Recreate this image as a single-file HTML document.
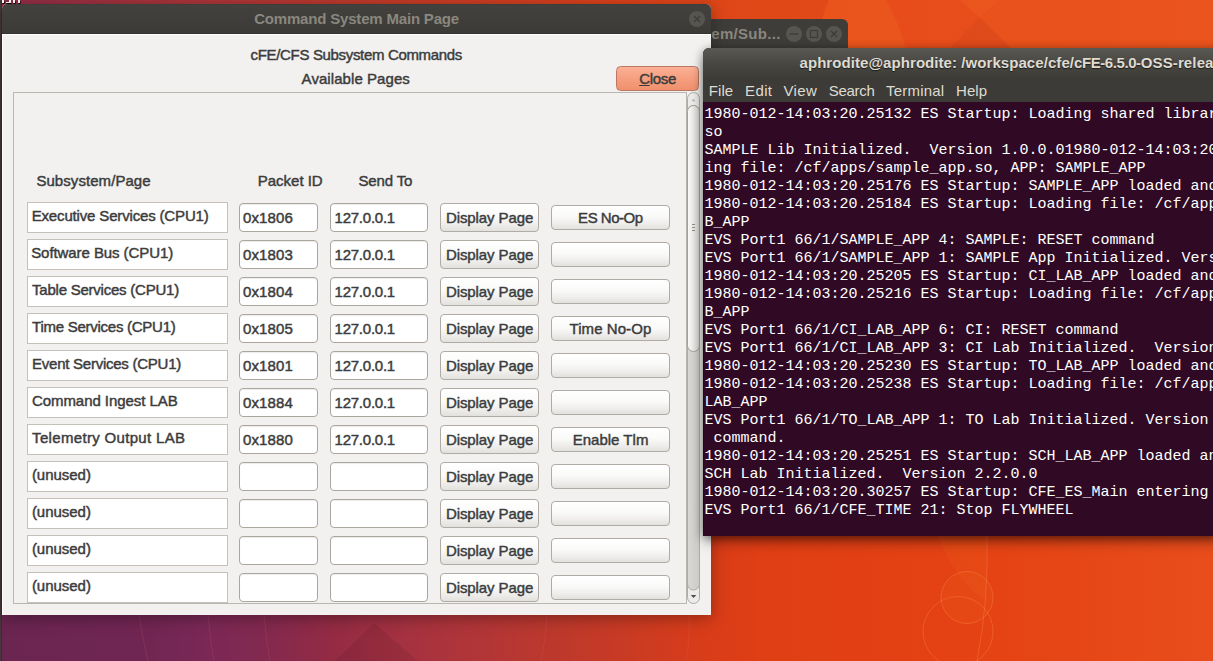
<!DOCTYPE html>
<html>
<head>
<meta charset="utf-8">
<title>Command System Main Page</title>
<style>
*{box-sizing:border-box;margin:0;padding:0}
html,body{width:1213px;height:661px;overflow:hidden}
body{position:relative;font-family:"Liberation Sans",sans-serif;font-size:15px;line-height:17px;color:#3c3c3c;background:#e2431a}
.abs{position:absolute}
svg{display:block}
#wall{left:0;top:0;width:1213px;height:661px;background:linear-gradient(90deg,#6a2551 0px,#712652 150px,#7a2856 205px,#84294e 270px,#942b43 335px,#a63240 410px,#b03538 470px,#bb382e 545px,#c53a26 605px,#d63c1b 690px,#e03e14 760px,#e54314 1000px,#e94d1c 1213px)}
#walltop{left:0;top:0;width:1213px;height:60px;background:linear-gradient(90deg,#8f2c4a 0px,#a3333c 130px,#ab353a 200px,#c53b27 400px,#dc421a 620px,#e64a19 760px,#e9511d 1213px)}
#strip{left:0;top:0;width:2px;height:661px;background:linear-gradient(90deg,#48383b 0,#48383b 1px,#3a2e30 1px)}
#bw{left:600px;top:19px;width:248px;height:41px;background:#3e3d39;border-radius:0 6px 0 0}
#mw{left:2px;top:4px;width:709px;height:611px;background:linear-gradient(90deg,#fff 0,#fff 1px,#f2f1f0 1px);border-radius:5px 5px 0 0;box-shadow:0 3px 16px rgba(0,0,0,.34)}
#mwt{left:0;top:0;width:709px;height:30px;background:linear-gradient(#3b3d3a 0,#42413d 1.500px,#3c3b37 100%);border-radius:5px 5px 0 0;border-bottom:1px solid #33322f}
.ttl{font-weight:bold;color:#8a877f;white-space:nowrap}
.txt{white-space:nowrap;-webkit-text-stroke:0.45px #3c3c3c}
.circ{width:16px;height:16px;border-radius:50%;background:#57554f}
#closeb{left:614px;top:62px;width:83px;height:25px;border:1px solid #bb7860;border-radius:4.500px;background:linear-gradient(#fbb095,#f59f80 50%,#f0906c)}
#frame{left:11px;top:88px;width:674px;height:512px;border:1px solid #bab7b1;overflow:hidden}
#sb{left:685px;top:88px;width:13px;height:512px}
.lbl{background:#fff;border:1px solid #c4c1bb;height:31px;width:201px;left:13px}
.ent{background:#fff;border:1px solid #aba79f;border-radius:4px;height:29px;box-shadow:inset 0 1px 1px rgba(0,0,0,.08)}
.btn{border:1px solid #b0aca5;border-radius:4px;background:linear-gradient(#fff,#fafaf9 45%,#efeeec 75%,#e3e1dd)}
#term{left:703px;top:48px;width:520px;height:488px;background:#300a24;border-radius:6px 0 0 0;box-shadow:0 6px 14px -2px rgba(0,0,0,.5),0 1px 8px rgba(0,0,0,.3)}
#termt{left:0;top:0;width:520px;height:31px;background:linear-gradient(#5a5852,#45443f 60%,#3c3b37);border-radius:6px 0 0 0}
#termm{left:0;top:31px;width:520px;height:23px;background:#3c3b37}
.mi{color:#dfdbd2;white-space:nowrap}
#tt{left:1.4px;top:58px;font-family:"Liberation Mono",monospace;font-size:15px;line-height:18px;color:#fff;white-space:pre}

.ish{background:#fff;box-shadow:0.6px 1px 0 rgba(0,0,0,.9)}
#termb{left:0;top:54px;width:1px;height:434px;background:#25061b}
#mwhl{left:1px;top:30px;width:708px;height:1px;background:#fff}

</style>
</head>
<body>
<div id="wall" class="abs"></div>
<div id="walltop" class="abs"></div>
<svg class="abs" style="left:0;top:0" width="1213" height="661">
<path d="M829 0Q817 25 822 50H906Q899 22 886 0z" fill="#ffa030" fill-opacity=".11"/>
<path d="M700 0H829Q817 25 822 50H700z" fill="#000" fill-opacity=".02"/>
<path d="M960 0H1000L979.500 17.500z" fill="#ffa030" fill-opacity=".1"/>
<path d="M979.500 17.500L1013 50H948z" fill="#000" fill-opacity=".035"/>
<path d="M1000 0H1213V50H1013L979.500 17.500z" fill="#ffa030" fill-opacity=".05"/>
<path d="M374 623L335 661H418z" fill="#000" fill-opacity=".07"/>
<path d="M139 615Q143 640 148 661M208 615Q210 640 214 661M264 615Q266 640 270 661M547 615Q546 640 541 661M689 615Q690 640 686 661" fill="none" stroke="#ff7a7a" stroke-opacity=".13" stroke-width="1"/>
<circle cx="967" cy="597.500" r="26" fill="#ffa030" fill-opacity=".06" stroke="#ff9a55" stroke-opacity=".3" stroke-width="1"/>
<circle cx="958" cy="631.500" r="35" fill="none" stroke="#ff9a55" stroke-opacity=".28" stroke-width="1"/>
<path d="M987 536Q989 600 977 661" fill="none" stroke="#ff9a55" stroke-opacity=".28" stroke-width="1"/>
<path d="M938 536H987Q988 580 985 600Q955 580 938 536z" fill="#ffa030" fill-opacity=".07"/>
</svg>
<div id="strip" class="abs"></div>
<div class="abs ish" style="left:2px;top:0;width:2px;height:3px"></div>
<div class="abs ish" style="left:5.5px;top:1.6px;width:5px;height:1.4px"></div>
<div class="abs ish" style="left:9.2px;top:0;width:1.5px;height:2px;box-shadow:none"></div>
<div class="abs ish" style="left:13px;top:0;width:2px;height:3px"></div>
<div class="abs ish" style="left:18px;top:0;width:2px;height:3px"></div>

<div class="abs" id="bw">
<span class="abs ttl" style="left:111.30px;top:6px;letter-spacing:0.301px;">em/Sub...</span>
<div class="abs circ" style="left:186px;top:7px"><svg width="16" height="16"><path d="M3.700 8h8.600" stroke="#3b3a36" stroke-width="1.2" fill="none"/></svg></div>
<div class="abs circ" style="left:206px;top:7px"><svg width="16" height="16"><rect x="4.5" y="4.5" width="7" height="7" stroke="#3b3a36" stroke-width="1.1" fill="none"/></svg></div>
<div class="abs circ" style="left:226px;top:7px"><svg width="16" height="16"><path d="M5 5l6 6M11 5l-6 6" stroke="#3b3a36" stroke-width="1.15" fill="none"/></svg></div>
</div>
<div id="mw" class="abs">
<div id="mwt" class="abs"><span class="abs ttl" style="left:252.20px;top:6px;letter-spacing:-0.185px;">Command System Main Page</span>
<div class="abs circ" style="left:687px;top:7px"><svg width="16" height="16"><path d="M5 5l6 6M11 5l-6 6" stroke="#3b3a36" stroke-width="1.15" fill="none"/></svg></div></div>
<div id="mwhl" class="abs"></div>
<span class="abs txt" style="left:248.60px;top:42px;letter-spacing:-0.337px;">cFE/CFS Subsystem Commands</span>
<span class="abs txt" style="left:299.60px;top:66px;letter-spacing:0.066px;">Available Pages</span>
<div class="abs" id="closeb"><span class="abs txt" style="left:22.20px;top:3px;letter-spacing:-0.292px;"><u>C</u>lose</span></div>
<div class="abs" id="frame">
<span class="abs txt" style="left:22.40px;top:79px;letter-spacing:0.064px;">Subsystem/Page</span>
<span class="abs txt" style="left:243.80px;top:79px;letter-spacing:-0.015px;">Packet ID</span>
<span class="abs txt" style="left:344.50px;top:79px;letter-spacing:-0.154px;">Send To</span>
<div class="abs lbl" style="top:109px"><span class="abs txt" style="left:3.70px;top:4px;letter-spacing:-0.160px;">Executive Services (CPU1)</span></div>
<div class="abs ent" style="left:225px;top:110px;width:79px"><span class="abs txt" style="left:2.90px;top:5px;letter-spacing:0.147px;">0x1806</span></div>
<div class="abs ent" style="left:316px;top:110px;width:98px"><span class="abs txt" style="left:3.60px;top:5px;letter-spacing:-0.251px;">127.0.0.1</span></div>
<div class="abs btn" style="left:426px;top:110px;width:99px;height:29px"><span class="abs txt" style="left:5.00px;top:5px;letter-spacing:-0.099px;">Display Page</span></div>
<div class="abs btn" style="left:537px;top:112px;width:119px;height:25px"><span class="abs txt" style="left:26.10px;top:3px;letter-spacing:-0.470px;">ES No-Op</span></div>
<div class="abs lbl" style="top:146px"><span class="abs txt" style="left:3.20px;top:4px;letter-spacing:-0.073px;">Software Bus (CPU1)</span></div>
<div class="abs ent" style="left:225px;top:147px;width:79px"><span class="abs txt" style="left:2.90px;top:5px;letter-spacing:0.147px;">0x1803</span></div>
<div class="abs ent" style="left:316px;top:147px;width:98px"><span class="abs txt" style="left:3.60px;top:5px;letter-spacing:-0.251px;">127.0.0.1</span></div>
<div class="abs btn" style="left:426px;top:147px;width:99px;height:29px"><span class="abs txt" style="left:5.00px;top:5px;letter-spacing:-0.099px;">Display Page</span></div>
<div class="abs btn" style="left:537px;top:149px;width:119px;height:25px"></div>
<div class="abs lbl" style="top:183px"><span class="abs txt" style="left:4.10px;top:4px;letter-spacing:-0.234px;">Table Services (CPU1)</span></div>
<div class="abs ent" style="left:225px;top:184px;width:79px"><span class="abs txt" style="left:2.90px;top:5px;letter-spacing:0.147px;">0x1804</span></div>
<div class="abs ent" style="left:316px;top:184px;width:98px"><span class="abs txt" style="left:3.60px;top:5px;letter-spacing:-0.251px;">127.0.0.1</span></div>
<div class="abs btn" style="left:426px;top:184px;width:99px;height:29px"><span class="abs txt" style="left:5.00px;top:5px;letter-spacing:-0.099px;">Display Page</span></div>
<div class="abs btn" style="left:537px;top:186px;width:119px;height:25px"></div>
<div class="abs lbl" style="top:220px"><span class="abs txt" style="left:4.10px;top:4px;letter-spacing:-0.262px;">Time Services (CPU1)</span></div>
<div class="abs ent" style="left:225px;top:221px;width:79px"><span class="abs txt" style="left:2.90px;top:5px;letter-spacing:0.147px;">0x1805</span></div>
<div class="abs ent" style="left:316px;top:221px;width:98px"><span class="abs txt" style="left:3.60px;top:5px;letter-spacing:-0.251px;">127.0.0.1</span></div>
<div class="abs btn" style="left:426px;top:221px;width:99px;height:29px"><span class="abs txt" style="left:5.00px;top:5px;letter-spacing:-0.099px;">Display Page</span></div>
<div class="abs btn" style="left:537px;top:223px;width:119px;height:25px"><span class="abs txt" style="left:17.50px;top:3px;letter-spacing:0.067px;">Time No-Op</span></div>
<div class="abs lbl" style="top:257px"><span class="abs txt" style="left:4.10px;top:4px;letter-spacing:-0.253px;">Event Services (CPU1)</span></div>
<div class="abs ent" style="left:225px;top:258px;width:79px"><span class="abs txt" style="left:2.90px;top:5px;letter-spacing:0.147px;">0x1801</span></div>
<div class="abs ent" style="left:316px;top:258px;width:98px"><span class="abs txt" style="left:3.60px;top:5px;letter-spacing:-0.251px;">127.0.0.1</span></div>
<div class="abs btn" style="left:426px;top:258px;width:99px;height:29px"><span class="abs txt" style="left:5.00px;top:5px;letter-spacing:-0.099px;">Display Page</span></div>
<div class="abs btn" style="left:537px;top:260px;width:119px;height:25px"></div>
<div class="abs lbl" style="top:294px"><span class="abs txt" style="left:3.90px;top:4px;letter-spacing:-0.053px;">Command Ingest LAB</span></div>
<div class="abs ent" style="left:225px;top:295px;width:79px"><span class="abs txt" style="left:2.90px;top:5px;letter-spacing:0.147px;">0x1884</span></div>
<div class="abs ent" style="left:316px;top:295px;width:98px"><span class="abs txt" style="left:3.60px;top:5px;letter-spacing:-0.251px;">127.0.0.1</span></div>
<div class="abs btn" style="left:426px;top:295px;width:99px;height:29px"><span class="abs txt" style="left:5.00px;top:5px;letter-spacing:-0.099px;">Display Page</span></div>
<div class="abs btn" style="left:537px;top:297px;width:119px;height:25px"></div>
<div class="abs lbl" style="top:331px"><span class="abs txt" style="left:4.10px;top:4px;letter-spacing:0.323px;">Telemetry Output LAB</span></div>
<div class="abs ent" style="left:225px;top:332px;width:79px"><span class="abs txt" style="left:2.90px;top:5px;letter-spacing:0.147px;">0x1880</span></div>
<div class="abs ent" style="left:316px;top:332px;width:98px"><span class="abs txt" style="left:3.60px;top:5px;letter-spacing:-0.251px;">127.0.0.1</span></div>
<div class="abs btn" style="left:426px;top:332px;width:99px;height:29px"><span class="abs txt" style="left:5.00px;top:5px;letter-spacing:-0.099px;">Display Page</span></div>
<div class="abs btn" style="left:537px;top:334px;width:119px;height:25px"><span class="abs txt" style="left:20.70px;top:3px;letter-spacing:0.011px;">Enable Tlm</span></div>
<div class="abs lbl" style="top:368px"><span class="abs txt" style="left:3.90px;top:4px;letter-spacing:-0.025px;">(unused)</span></div>
<div class="abs ent" style="left:225px;top:369px;width:79px"></div>
<div class="abs ent" style="left:316px;top:369px;width:98px"></div>
<div class="abs btn" style="left:426px;top:369px;width:99px;height:29px"><span class="abs txt" style="left:5.00px;top:5px;letter-spacing:-0.099px;">Display Page</span></div>
<div class="abs btn" style="left:537px;top:371px;width:119px;height:25px"></div>
<div class="abs lbl" style="top:405px"><span class="abs txt" style="left:3.90px;top:4px;letter-spacing:-0.025px;">(unused)</span></div>
<div class="abs ent" style="left:225px;top:406px;width:79px"></div>
<div class="abs ent" style="left:316px;top:406px;width:98px"></div>
<div class="abs btn" style="left:426px;top:406px;width:99px;height:29px"><span class="abs txt" style="left:5.00px;top:5px;letter-spacing:-0.099px;">Display Page</span></div>
<div class="abs btn" style="left:537px;top:408px;width:119px;height:25px"></div>
<div class="abs lbl" style="top:442px"><span class="abs txt" style="left:3.90px;top:4px;letter-spacing:-0.025px;">(unused)</span></div>
<div class="abs ent" style="left:225px;top:443px;width:79px"></div>
<div class="abs ent" style="left:316px;top:443px;width:98px"></div>
<div class="abs btn" style="left:426px;top:443px;width:99px;height:29px"><span class="abs txt" style="left:5.00px;top:5px;letter-spacing:-0.099px;">Display Page</span></div>
<div class="abs btn" style="left:537px;top:445px;width:119px;height:25px"></div>
<div class="abs lbl" style="top:479px"><span class="abs txt" style="left:3.90px;top:4px;letter-spacing:-0.025px;">(unused)</span></div>
<div class="abs ent" style="left:225px;top:480px;width:79px"></div>
<div class="abs ent" style="left:316px;top:480px;width:98px"></div>
<div class="abs btn" style="left:426px;top:480px;width:99px;height:29px"><span class="abs txt" style="left:5.00px;top:5px;letter-spacing:-0.099px;">Display Page</span></div>
<div class="abs btn" style="left:537px;top:482px;width:119px;height:25px"></div>
</div>
<div class="abs" id="sb"><svg width="13" height="512">
<defs><linearGradient id="tg" x1="0" x2="1" y1="0" y2="0"><stop offset="0" stop-color="#d9d8d4"/><stop offset="1" stop-color="#cccbc7"/></linearGradient>
<linearGradient id="th" x1="0" x2="1" y1="0" y2="0"><stop offset="0" stop-color="#fbfbfa"/><stop offset="1" stop-color="#d6d4d0"/></linearGradient></defs>
<rect x="0.5" y="0.5" width="12" height="511" rx="6" fill="#ecebe9" stroke="#aeaba5"/>
<rect x="0.5" y="13.5" width="12" height="484.500" rx="6" fill="url(#tg)" stroke="#aeaba5"/>
<rect x="0.5" y="13.5" width="12" height="246" rx="6" fill="url(#th)" stroke="#a39f98"/>
<path d="M5 132.5h3M5 135.5h3M5 138.5h3" stroke="#8f8c86" stroke-width="1"/>
<path d="M4.5 9.300l2-2.500l2 2.500z" fill="#b8b6b1"/>
<path d="M3.800 503l2.750 2.900l2.750-2.900z" fill="#4c4c4c"/>
</svg></div>

</div>
<div id="term" class="abs">
<div id="termt" class="abs"><span class="abs" id="termtt" style="left:96.5px;top:6px;font-weight:bold;color:#dfdbd2;white-space:nowrap;letter-spacing:.065px;text-shadow:0 1px 1px rgba(0,0,0,.6)">aphrodite@aphrodite: /workspace/cfe/<span style="letter-spacing:-.42px">cFE-6.5.0-</span><span style="letter-spacing:.13px">OSS-release/build</span></span></div>
<div id="termm" class="abs"><span class="abs mi" style="left:5.70px;top:3px;letter-spacing:0.107px;">File</span><span class="abs mi" style="left:42.10px;top:3px;letter-spacing:0.360px;">Edit</span><span class="abs mi" style="left:80.40px;top:3px;letter-spacing:0.438px;">View</span><span class="abs mi" style="left:125.70px;top:3px;letter-spacing:-0.272px;">Search</span><span class="abs mi" style="left:183.00px;top:3px;letter-spacing:0.202px;">Terminal</span><span class="abs mi" style="left:253.00px;top:3px;letter-spacing:0.060px;">Help</span></div>
<div id="termb" class="abs"></div>
<div id="tt" class="abs">1980-012-14:03:20.25132 ES Startup: Loading shared library
so
SAMPLE Lib Initialized.  Version 1.0.0.01980-012-14:03:20.25169
ing file: /cf/apps/sample_app.so, APP: SAMPLE_APP
1980-012-14:03:20.25176 ES Startup: SAMPLE_APP loaded and created
1980-012-14:03:20.25184 ES Startup: Loading file: /cf/apps/ci_lab
B_APP
EVS Port1 66/1/SAMPLE_APP 4: SAMPLE: RESET command
EVS Port1 66/1/SAMPLE_APP 1: SAMPLE App Initialized. Version
1980-012-14:03:20.25205 ES Startup: CI_LAB_APP loaded and created
1980-012-14:03:20.25216 ES Startup: Loading file: /cf/apps/to_lab
B_APP
EVS Port1 66/1/CI_LAB_APP 6: CI: RESET command
EVS Port1 66/1/CI_LAB_APP 3: CI Lab Initialized.  Version 2.2.0.0
1980-012-14:03:20.25230 ES Startup: TO_LAB_APP loaded and created
1980-012-14:03:20.25238 ES Startup: Loading file: /cf/apps/sch_lab
LAB_APP
EVS Port1 66/1/TO_LAB_APP 1: TO Lab Initialized. Version 2.2.0.0
 command.
1980-012-14:03:20.25251 ES Startup: SCH_LAB_APP loaded and created
SCH Lab Initialized.  Version 2.2.0.0
1980-012-14:03:20.30257 ES Startup: CFE_ES_Main entering
EVS Port1 66/1/CFE_TIME 21: Stop FLYWHEEL</div>
</div>

</body>
</html>
